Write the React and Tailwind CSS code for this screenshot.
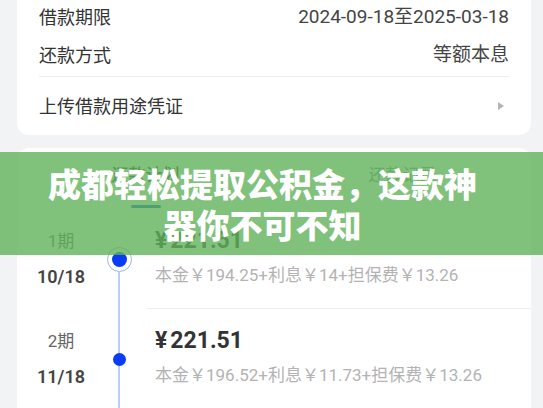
import React from 'react';

const font = { fontFamily: 'Roboto, "Noto Sans CJK SC", sans-serif' };

function InfoRow({ label, value, className }) {
  return (
    <div className={`flex items-center justify-between ${className}`}>
      <span className="text-[18px] text-[#333]">{label}</span>
      <span className="text-[19px] text-[#444]">{value}</span>
    </div>
  );
}

function PlanRow({ no, date, amount, detail, first, ring }) {
  return (
    <div className="flex h-[100px]">
      <div className="w-[88px] flex flex-col justify-center items-center">
        <div className="h-[35px] flex items-center text-[17px] text-[#666]">{no}</div>
        <div className="h-[35px] flex items-center text-[18px] font-semibold text-[#444]">{date}</div>
      </div>
      <div className="w-[28px] flex flex-col items-center">
        <div className={`flex-1 w-[2px] ${first ? 'bg-transparent' : 'bg-[#b9cdf6]'}`} />
        {ring ? (
          <div className="w-[25px] h-[25px] rounded-full border-[1.5px] border-[#9db4ea] flex items-center justify-center">
            <div className="w-[15px] h-[15px] rounded-full bg-[#0a3cf5]" />
          </div>
        ) : (
          <div className="w-[13px] h-[13px] rounded-full bg-[#0a3cf5]" />
        )}
        <div className="flex-1 w-[2px] bg-[#b9cdf6]" />
      </div>
      <div className="flex-1 ml-[14px] pl-[8px] border-b border-[#eeeeee] flex flex-col justify-center">
        <div className="h-[35px] flex items-center text-[23px] font-bold text-[#333]">
          <span>¥</span>
          <span className="ml-[3px]">{amount}</span>
        </div>
        <div className="h-[35px] flex items-center text-[17px] text-[#b3b3b3]">{detail}</div>
      </div>
    </div>
  );
}

export default function App() {
  return (
    <div className="relative w-full h-[408px] overflow-hidden bg-[#f2f3f5] pl-[17px] pr-[12px]" style={font}>
      <div className="bg-white rounded-b-xl px-[22px]">
        <InfoRow className="h-[34px]" label="借款期限" value="2024-09-18至2025-03-18" />
        <div className="border-b border-[#eeeeee]">
          <InfoRow className="h-[42px]" label="还款方式" value="等额本息" />
        </div>
        <div className="h-[58px] flex items-center justify-between">
          <span className="text-[18px] text-[#333]">上传借款用途凭证</span>
          <svg width="8" height="10" viewBox="0 0 8 10" className="mr-[4px]">
            <path d="M1 1 L7 5 L1 9 Z" fill="#b5b5b5" />
          </svg>
        </div>
      </div>

      <div className="bg-white rounded-t-xl mt-[13px]">
        <div className="grid grid-cols-2 h-[61px]">
          <div className="flex flex-col items-center pt-[15px]">
            <span className="h-[24px] leading-[24px] text-[17px] text-[#333] font-medium">还款计划</span>
            <span className="mt-[18px] h-[3px] w-[30px] rounded-full bg-[#1d4fd8]" />
          </div>
          <div className="flex flex-col items-center pt-[15px]">
            <span className="h-[24px] leading-[24px] text-[17px] text-[#888]">还款记录</span>
          </div>
        </div>
        <PlanRow
          first
          ring
          no="1期"
          date="10/18"
          amount="221.51"
          detail="本金￥194.25+利息￥14+担保费￥13.26"
        />
        <PlanRow
          no="2期"
          date="11/18"
          amount="221.51"
          detail="本金￥196.52+利息￥11.73+担保费￥13.26"
        />
      </div>

      <div className="absolute left-0 right-0 top-[152px] h-[103px] bg-[rgba(96,178,90,0.8)] flex items-center justify-center pr-[18px]">
        <div className="text-center text-white font-black text-[33px] leading-[41px]" style={{ fontFamily: '"Noto Sans CJK SC", sans-serif' }}>
          <div>成都轻松提取公积金，这款神</div>
          <div>器你不可不知</div>
        </div>
      </div>
    </div>
  );
}
